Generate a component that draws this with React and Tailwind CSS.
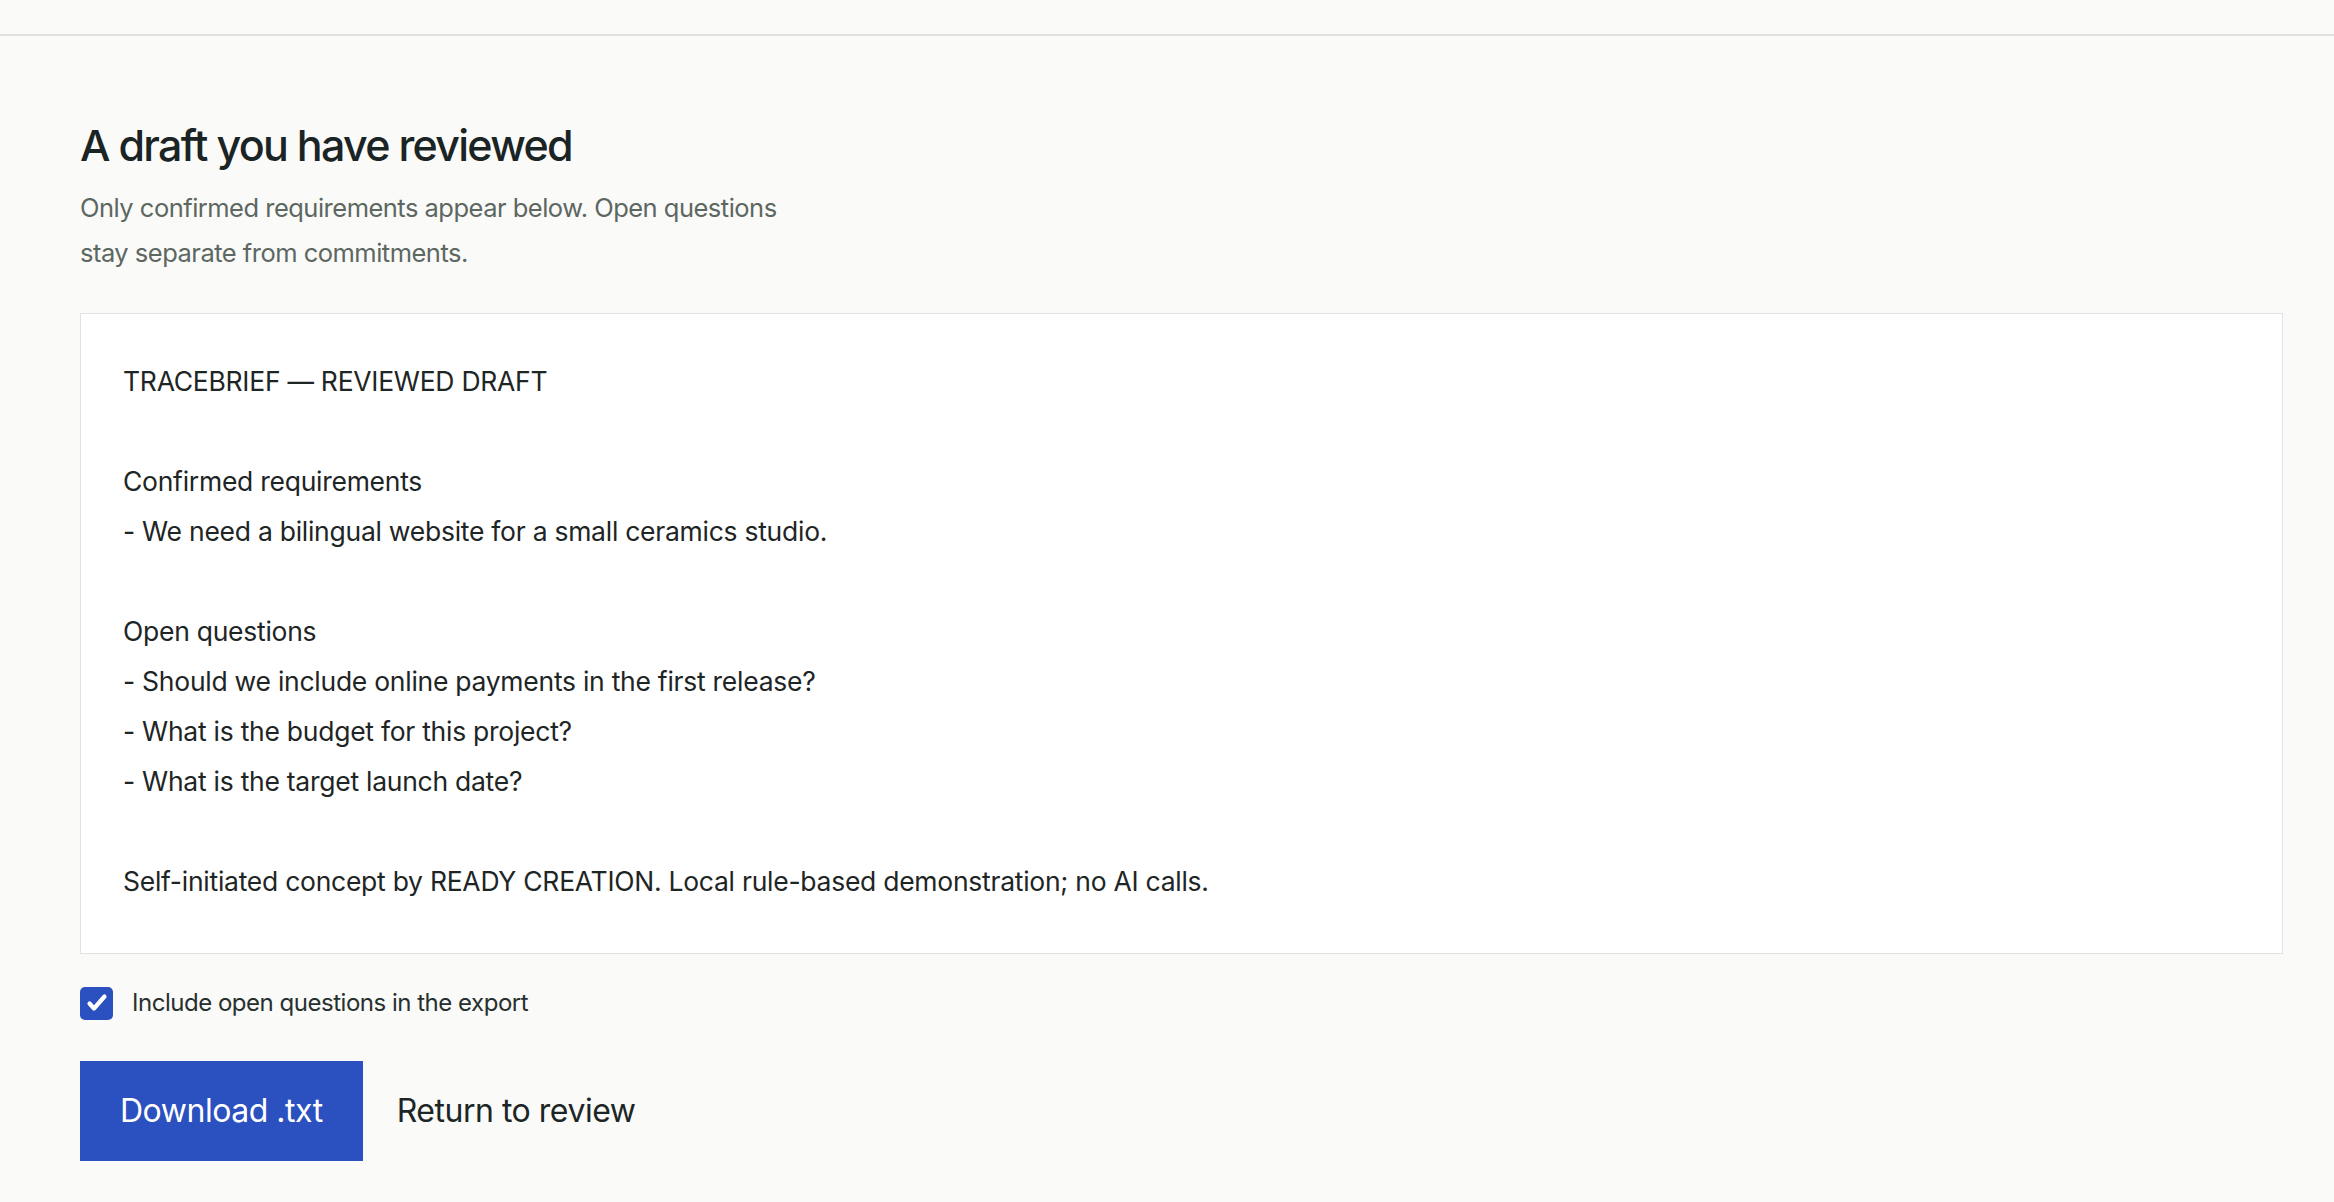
import { useState } from "react";

const draft = `TRACEBRIEF — REVIEWED DRAFT

Confirmed requirements
- We need a bilingual website for a small ceramics studio.

Open questions
- Should we include online payments in the first release?
- What is the budget for this project?
- What is the target launch date?

Self-initiated concept by READY CREATION. Local rule-based demonstration; no AI calls.`;

export default function App() {
  const [includeOpen, setIncludeOpen] = useState(true);

  return (
    <div className="min-h-screen bg-[#fafaf8] text-[#1c2424] font-['Inter',sans-serif]">
      {/* Top bar */}
      <div className="h-[36px] border-b-2 border-[#dde2df]" />

      <main className="pl-[80px] pr-[51px] pt-[84px] pb-10">
        <h1 className="text-[43px] leading-[50px] font-medium tracking-[-0.04em] text-[#1b2425]">
          A draft you have reviewed
        </h1>
        <p className="mt-[15px] max-w-[730px] text-[25.5px] leading-[45px] tracking-[-0.02em] text-[#5d6762]">
          Only confirmed requirements appear below. Open questions stay separate from commitments.
        </p>

        <pre className="mt-[38px] border-[1.5px] border-[#dfe3e1] bg-white pl-[42px] pr-10 pt-[42px] pb-[47px] whitespace-pre-wrap font-['Inter',sans-serif] text-[26.5px] leading-[50px] tracking-[-0.01em] text-[#1e2525]">
          {draft}
        </pre>

        <label className="mt-[31px] flex items-center gap-[19px] cursor-pointer select-none">
          <button
            type="button"
            role="checkbox"
            aria-checked={includeOpen}
            onClick={() => setIncludeOpen(!includeOpen)}
            className={`flex h-[33px] w-[33px] items-center justify-center rounded-[5px] ${
              includeOpen ? "bg-[#2b50bf]" : "border-2 border-[#9aa3a0] bg-white"
            }`}
          >
            {includeOpen && (
              <svg width="24" height="24" viewBox="0 0 24 24" fill="none">
                <path d="M4.5 12.5l4.5 5L19.5 5.5" stroke="white" strokeWidth="4.2" strokeLinecap="round" strokeLinejoin="round" />
              </svg>
            )}
          </button>
          <span className="text-[24px] tracking-[-0.02em] text-[#27302f]">Include open questions in the export</span>
        </label>

        <div className="mt-[40px] flex items-center gap-[34px]">
          <button className="h-[100px] bg-[#2b50bf] px-[40px] text-[32px] tracking-[-0.015em] text-white">
            Download .txt
          </button>
          <button className="text-[32px] tracking-[-0.015em] text-[#1c2626]">Return to review</button>
        </div>
      </main>
    </div>
  );
}
